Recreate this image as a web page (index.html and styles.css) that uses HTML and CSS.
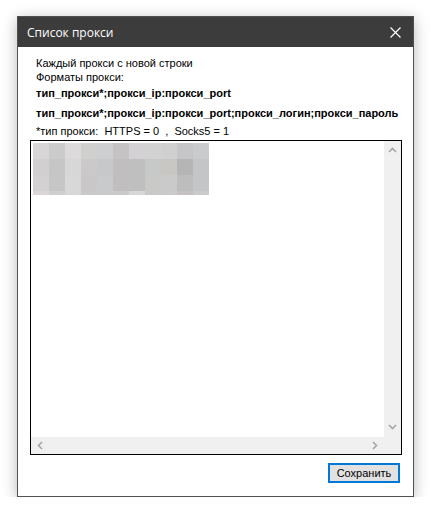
FILE: index.html
```html
<!DOCTYPE html>
<html lang="ru">

<head>
    <meta charset="UTF-8">
    <meta name="viewport" content="width=device-width, initial-scale=1.0">
    <title>Список прокси</title>
    <link rel="stylesheet" href="styles.css">
</head>

<body>
    <div class="window">
        <div class="title-bar">
            <div class="title-text">Список прокси</div>
            <svg class="close-icon" width="11" height="11" viewBox="0 0 11 11">
                <path d="M0.5 0.5 L10.5 10.5 M10.5 0.5 L0.5 10.5" stroke="#fff" stroke-width="1.2" fill="none" />
            </svg>
        </div>
        <div class="window-content">
            <div class="hint">
                <div class="hint-line">Каждый прокси с новой строки</div>
                <div class="hint-line">Форматы прокси:</div>
                <div class="hint-bold first">тип_прокси*;прокси_ip:прокси_port</div>
                <div class="hint-bold">тип_прокси*;прокси_ip:прокси_port;прокси_логин;прокси_пароль</div>
                <div class="hint-note">*тип прокси:&nbsp; HTTPS = 0&nbsp; ,&nbsp; Socks5 = 1</div>
            </div>
            <div class="text-box">
                <div class="text-area">
                    <div class="blur-grid"></div>
                </div>
                <div class="v-scroll">
                    <svg width="9" height="6" viewBox="0 0 9 6">
                        <path d="M1 5 L4.5 1.5 L8 5" stroke="#a6a6a6" stroke-width="1.6" fill="none" />
                    </svg>
                    <svg width="9" height="6" viewBox="0 0 9 6">
                        <path d="M1 1 L4.5 4.5 L8 1" stroke="#a6a6a6" stroke-width="1.6" fill="none" />
                    </svg>
                </div>
                <div class="h-scroll">
                    <svg width="6" height="9" viewBox="0 0 6 9">
                        <path d="M5 1 L1.5 4.5 L5 8" stroke="#a6a6a6" stroke-width="1.6" fill="none" />
                    </svg>
                    <svg width="6" height="9" viewBox="0 0 6 9">
                        <path d="M1 1 L4.5 4.5 L1 8" stroke="#a6a6a6" stroke-width="1.6" fill="none" />
                    </svg>
                </div>
                <div class="scroll-corner"></div>
            </div>
            <div class="footer">
                <button class="save-button">Сохранить</button>
            </div>
        </div>
    </div>

    <script>
        // pixelated (hidden) proxy list, row by row
        var BLUR_COLORS = [
            '#d8d6d7', '#cbcbcc', '#dcdadb', '#d0d0cf', '#cdcfd0', '#c5c3c4', '#d3d1d4', '#d2d2d2', '#d0d0d0', '#c6c6c8', '#cacbcd',
            '#d1cfd0', '#c6c6c6', '#d6d7d6', '#cbc9ca', '#c7c8ca', '#c0bebf', '#c0bfbf', '#c6c9c8', '#c8c7c4', '#b5b5b6', '#c4c5c7',
            '#d3d1d2', '#c5c6c5', '#d9d8d9', '#c9c7c8', '#c8cacc', '#c0bebf', '#c0bfbf', '#c9c9c8', '#c9cac9', '#bdbdbe', '#c4c5c7',
            '#dcd6d6', '#cfcfd0', '#d8d6d8', '#cbc9ca', '#c9c9cb', '#cbc9cb', '#dad7d9', '#cac9c7', '#cbcbcb', '#c5c1c0', '#cbcbcd'
        ]

        let gridElm = document.querySelector('.blur-grid')
        for (let i = 0; i < BLUR_COLORS.length; i++) {
            let cell = document.createElement('div')
            cell.className = 'blur-cell'
            cell.style.backgroundColor = BLUR_COLORS[i]
            gridElm.append(cell)
        }
    </script>
</body>

</html>
```

FILE: styles.css
```css
body {
    margin: 0;
    background-color: #fff;
    font-family: "Liberation Sans", Arial, sans-serif;
}

.window {
    margin: 16px 0 0 17px;
    width: 397px;
    height: 481px;
    box-sizing: border-box;
    border: 1px solid #505050;
    background-color: #fff;
    box-shadow: 0 3px 14px rgba(0, 0, 0, 0.28);
    display: flex;
    flex-direction: column;
}

.title-bar {
    height: 30px;
    background-color: #3c3c3c;
    display: flex;
    align-items: center;
    justify-content: space-between;
    padding: 0 12px 0 9px;
}

.title-text {
    color: #fff;
    font-family: "Open Sans", "Noto Sans", sans-serif;
    font-size: 12px;
}

.window-content {
    flex: 1;
    padding: 9px 11px 0 12px;
    display: flex;
    flex-direction: column;
}

.hint {
    padding-left: 6px;
    color: #000;
}

.hint-line {
    font-size: 11px;
    line-height: 14px;
}

.hint-bold {
    font-size: 11px;
    font-weight: bold;
    line-height: 14px;
    margin-top: 6px;
}

.hint-bold.first {
    margin-top: 2px;
}

.hint-note {
    font-size: 11px;
    line-height: 14px;
    margin-top: 4px;
}

.text-box {
    margin-top: 2px;
    width: 372px;
    height: 315px;
    box-sizing: border-box;
    border: 1px solid #000;
    display: grid;
    grid-template-columns: 1fr 17px;
    grid-template-rows: 1fr 17px;
}

.text-area {
    padding: 2px 2px;
}

.blur-grid {
    display: grid;
    grid-template-columns: repeat(11, 16px);
    grid-template-rows: 16px 16px 16px 4px;
}

.v-scroll {
    background-color: #f0f0f0;
    display: flex;
    flex-direction: column;
    justify-content: space-between;
    align-items: center;
    padding: 6px 0 7px;
}

.h-scroll {
    background-color: #f0f0f0;
    display: flex;
    justify-content: space-between;
    align-items: center;
    padding: 0 6px 0 6px;
}

.scroll-corner {
    background-color: #f0f0f0;
}

.footer {
    display: flex;
    justify-content: flex-end;
    padding-top: 8px;
    padding-right: 2px;
}

.save-button {
    width: 72px;
    height: 20px;
    border: 2px solid #0078d7;
    background-color: #e1e1e1;
    font-family: "Liberation Sans", Arial, sans-serif;
    font-size: 11px;
    color: #000;
    padding: 0;
}
```
